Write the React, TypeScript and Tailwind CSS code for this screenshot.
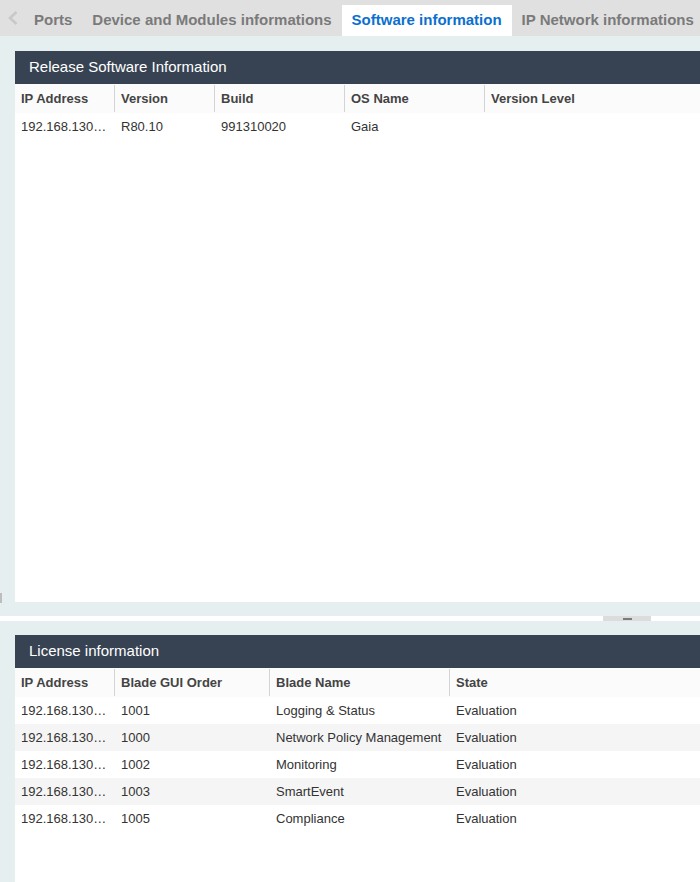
import React from "react";

const tabs = [
  { label: "Ports", active: false },
  { label: "Device and Modules informations", active: false },
  { label: "Software information", active: true },
  { label: "IP Network informations", active: false },
];

type Col = { label: string; w?: string };

function HeaderRow({ cols }: { cols: Col[] }) {
  return (
    <div className="flex h-[29px] bg-[#fbfbfb] items-center text-[13px] font-bold text-[#444]">
      {cols.map((c, i) => (
        <div
          key={c.label}
          className={`${c.w ?? "flex-1"} h-[27px] flex items-center ${i === 0 ? "pl-[6px]" : "border-l border-[#d4d4d4] pl-[6px]"}`}
        >
          {c.label}
        </div>
      ))}
    </div>
  );
}

function DataRow({ cols, cells, alt }: { cols: Col[]; cells: string[]; alt?: boolean }) {
  return (
    <div className={`flex h-[27px] items-center text-[13px] text-[#333] ${alt ? "bg-[#f5f5f5]" : "bg-white"}`}>
      {cols.map((c, i) => (
        <div key={c.label} className={`${c.w ?? "flex-1"} ${i === 0 ? "pl-[6px]" : "pl-[7px]"} whitespace-nowrap`}>
          {cells[i]}
        </div>
      ))}
    </div>
  );
}

function PanelHeader({ title }: { title: string }) {
  return (
    <div className="h-[33px] bg-[#374352] flex items-center pl-[14px] text-[15px] text-white">{title}</div>
  );
}

const cols1: Col[] = [
  { label: "IP Address", w: "w-[99px]" },
  { label: "Version", w: "w-[100px]" },
  { label: "Build", w: "w-[130px]" },
  { label: "OS Name", w: "w-[140px]" },
  { label: "Version Level" },
];

const cols2: Col[] = [
  { label: "IP Address", w: "w-[99px]" },
  { label: "Blade GUI Order", w: "w-[155px]" },
  { label: "Blade Name", w: "w-[180px]" },
  { label: "State" },
];

const licenses = [
  ["192.168.130…", "1001", "Logging & Status", "Evaluation"],
  ["192.168.130…", "1000", "Network Policy Management", "Evaluation"],
  ["192.168.130…", "1002", "Monitoring", "Evaluation"],
  ["192.168.130…", "1003", "SmartEvent", "Evaluation"],
  ["192.168.130…", "1005", "Compliance", "Evaluation"],
];

export default function App() {
  return (
    <div className="relative w-[700px] h-[882px] overflow-hidden bg-[#e5eff0] font-['Liberation_Sans',Arial,sans-serif]">
      <div className="flex items-end h-[36px] bg-[#e0e0e0] overflow-hidden">
        <div className="w-[24px] shrink-0 h-full flex items-center pl-[8px]">
          <svg width="10" height="14" viewBox="0 0 10 14">
            <polyline points="8.5,1 2,7 8.5,13" fill="none" stroke="#c8c8c8" strokeWidth="2.6" />
          </svg>
        </div>
        {tabs.map((t) => (
          <div
            key={t.label}
            className={`shrink-0 h-[31px] px-[10px] flex items-center text-[15px] font-bold whitespace-nowrap ${
              t.active ? "bg-white text-[#0b6fcf]" : "text-[#7a7a7a]"
            }`}
          >
            {t.label}
          </div>
        ))}
      </div>

      <div className="pl-[15px] pt-[15px]">
        <div className="h-[551px] bg-white flex flex-col">
          <PanelHeader title="Release Software Information" />
          <HeaderRow cols={cols1} />
          <DataRow cols={cols1} cells={["192.168.130…", "R80.10", "991310020", "Gaia", ""]} />
        </div>
      </div>

      <div className="h-[14px]" />
      <div className="h-[5px] bg-white flex">
        <div className="ml-[603px] w-[48px] h-full bg-[#dcdcdc] flex justify-center items-end">
          <div className="w-[9px] h-[2px] bg-[#7a7a7a] mb-[1px]" />
        </div>
      </div>
      <div className="h-[14px]" />

      <div className="pl-[15px]">
        <div className="h-[260px] bg-white flex flex-col">
          <PanelHeader title="License information" />
          <HeaderRow cols={cols2} />
          {licenses.map((r, i) => (
            <DataRow key={i} cols={cols2} cells={r} alt={i % 2 === 1} />
          ))}
        </div>
      </div>

      <div className="absolute left-0 top-[593px] w-[2px] h-[10px] bg-[#bdbdbd]" />
    </div>
  );
}
